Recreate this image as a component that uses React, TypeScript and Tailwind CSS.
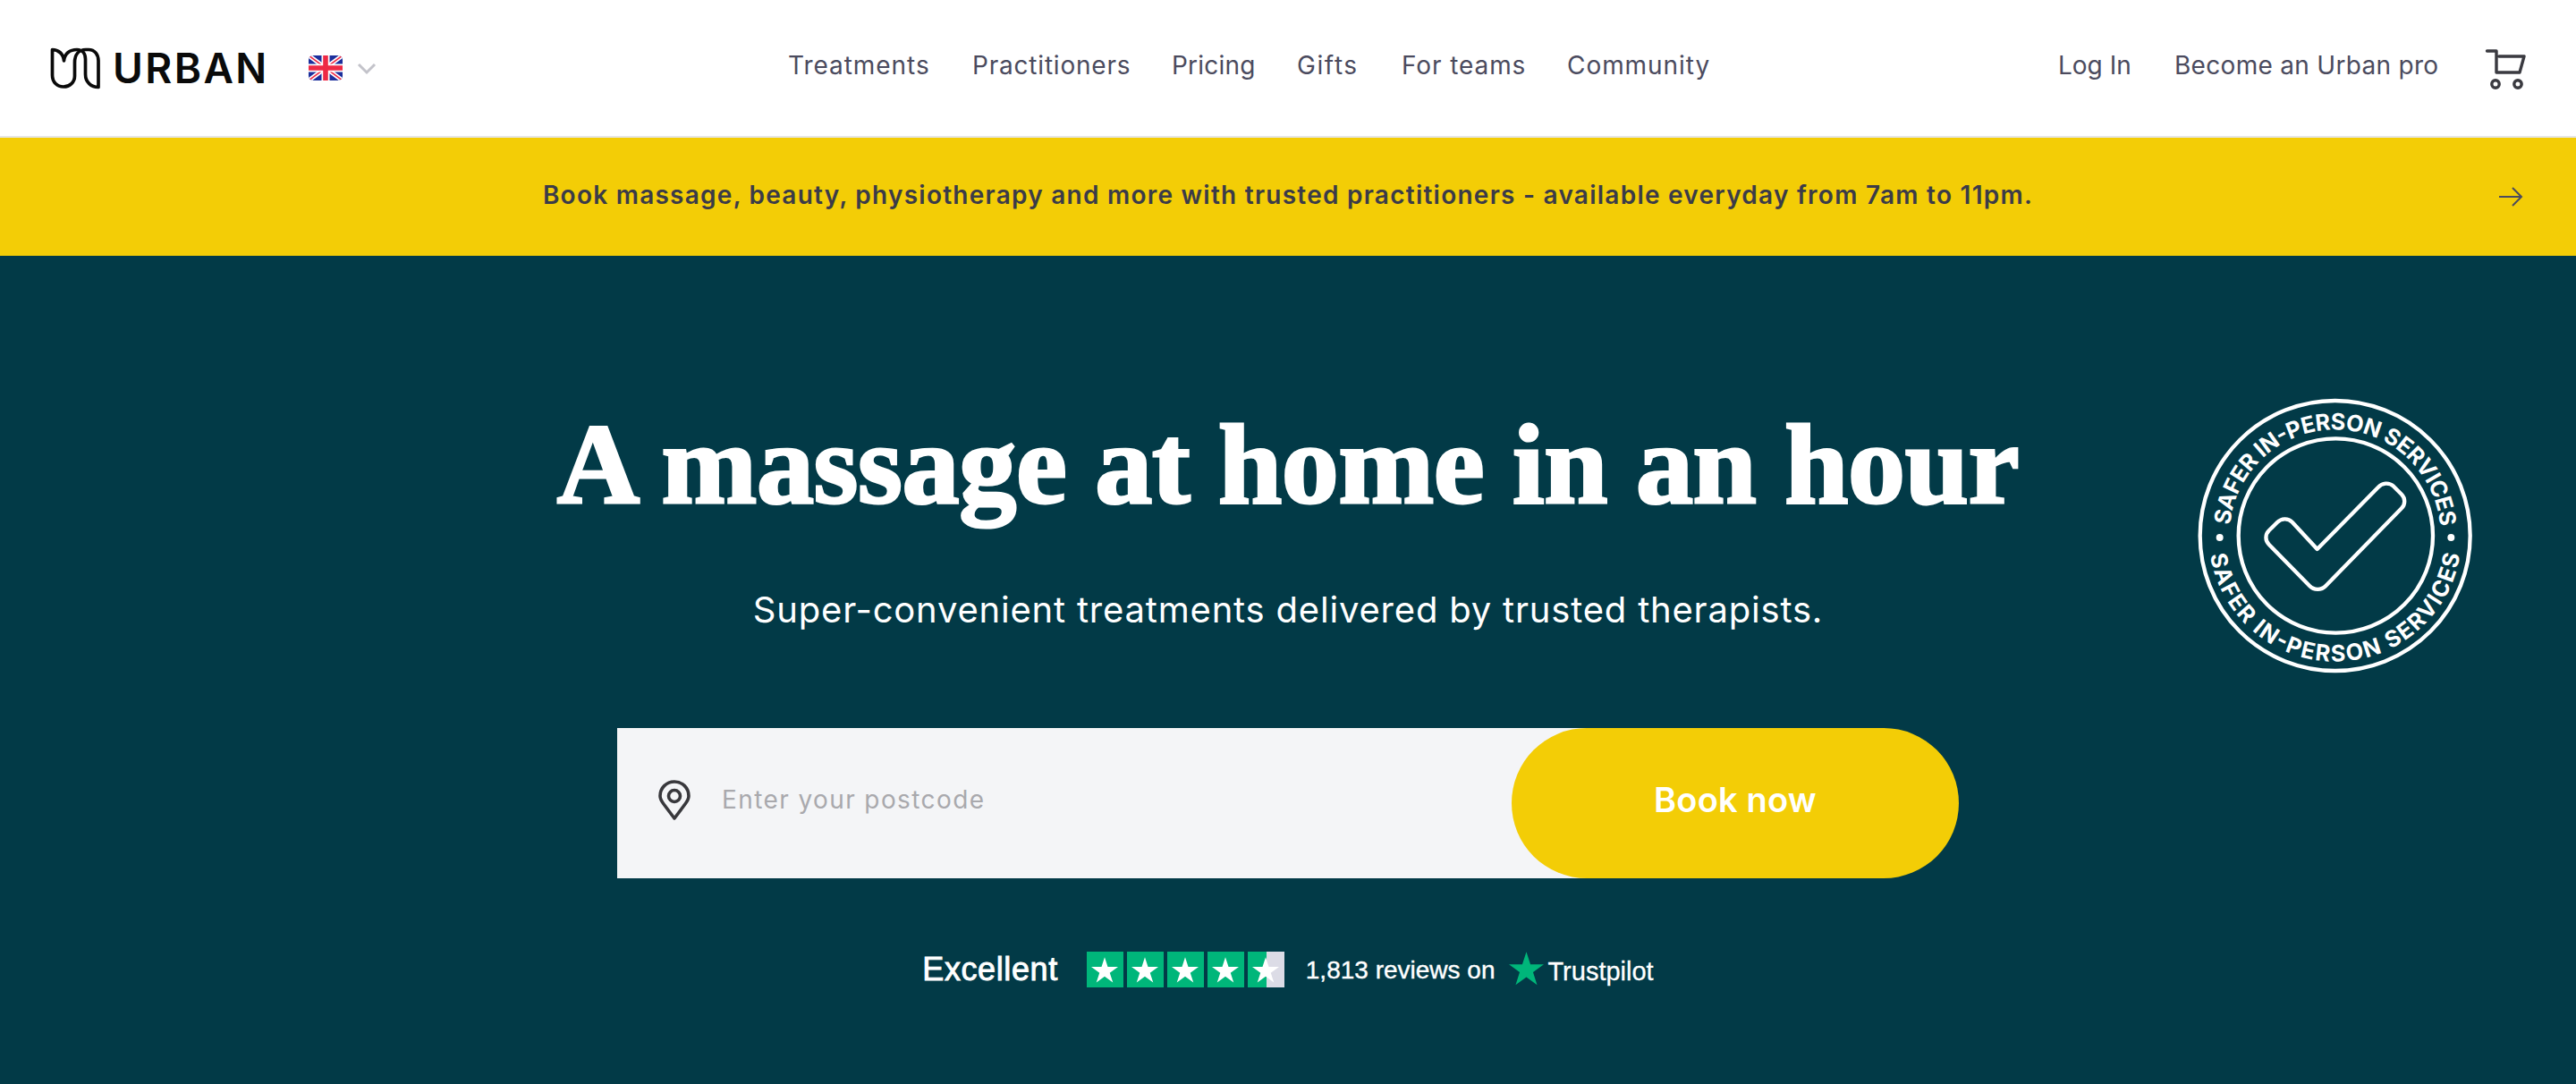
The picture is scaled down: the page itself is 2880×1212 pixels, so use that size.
import React from "react";

const navLinks = [
  { label: "Treatments", w: "w-[158px]", t: "tracking-[0.95px]", m: "" },
  { label: "Practitioners", w: "w-[175px]", t: "tracking-[0.8px]", m: "" },
  { label: "Pricing", w: "w-[92px]", t: "tracking-[0.2px]", m: "" },
  { label: "Gifts", w: "w-[69px]", t: "tracking-[1.6px]", m: "" },
  { label: "For teams", w: "w-[137px]", t: "tracking-[0.9px]", m: "" },
  { label: "Community", w: "w-[160px]", t: "tracking-[0.95px]", m: "" },
];

function LogoMark() {
  return (
    <svg width="70" height="56" viewBox="0 0 70 56" fill="none" stroke="#0a0a0a" strokeWidth="3.7" strokeLinejoin="round" className="shrink-0">
      <path d="M8.5 7.5 L8.5 36 C8.5 44 14 49 21 49 C28 49 33.5 44 33.5 37 L33.5 22 C33.5 13 38 7.5 46 7.5 L49 7.5 C56 7.5 60 13 60 20 L60 49.5 C52 49.5 45.5 44 45.5 35 L45.5 18 C45.5 12 42 7.5 36 7.5 C28 7.5 22 12 21.5 20 C21 12 15 7.5 8.5 7.5 Z" />
    </svg>
  );
}

function Flag() {
  return (
    <svg width="38" height="28" viewBox="0 0 38 28" className="shrink-0">
      <defs>
        <clipPath id="flagclip">
          <rect x="0" y="0" width="38" height="28" rx="5" />
        </clipPath>
      </defs>
      <g clipPath="url(#flagclip)">
        <rect width="38" height="28" fill="#1c2f9c" />
        <path d="M0 0 L38 28 M38 0 L0 28" stroke="#fff" strokeWidth="5" />
        <path d="M0 0 L38 28 M38 0 L0 28" stroke="#ee2a45" strokeWidth="1.6" />
        <path d="M19 0 V28 M0 14 H38" stroke="#fff" strokeWidth="9" />
        <path d="M19 0 V28 M0 14 H38" stroke="#ee2a45" strokeWidth="5.6" />
      </g>
    </svg>
  );
}

function Cart() {
  return (
    <svg width="54" height="54" viewBox="0 0 54 54" fill="none" stroke="#3a3a40" strokeWidth="3.4" strokeLinejoin="round" strokeLinecap="round" className="shrink-0">
      <path d="M4.5 8 H15 V32 H41 L46 14 H18" />
      <circle cx="14" cy="45" r="4.2" />
      <circle cx="39" cy="45" r="4.2" />
    </svg>
  );
}

function Pin() {
  return (
    <svg width="36" height="46" viewBox="0 0 36 46" fill="none" stroke="#38383c" strokeWidth="3.6" className="shrink-0">
      <path d="M18 43 L6 27 C3 23 2 21 2 18 C2 9 9 2 18 2 C27 2 34 9 34 18 C34 21 33 23 30 27 Z" strokeLinejoin="round" />
      <circle cx="18" cy="18" r="6.5" />
    </svg>
  );
}

function Badge() {
  return (
    <svg viewBox="0 0 1080 1020" width="360" height="340" fill="none" className="absolute left-[2420px] top-[144px]">
      <defs>
        <path id="badgeTop" d="M 218 505 A 354 354 0 0 1 926 505" />
        <path id="badgeBottom" d="M 148 505 A 424 424 0 0 0 996 505" />
      </defs>
      <circle cx="572" cy="507" r="453" stroke="#fff" strokeWidth="13" />
      <circle cx="574" cy="507" r="326" stroke="#fff" strokeWidth="13" />
      <circle cx="185" cy="513" r="12" fill="#fff" />
      <circle cx="961" cy="513" r="12" fill="#fff" />
      <path
        d="M512 552 L716 345 C730 330 752 327 768 341 L795 368 C808 381 808 402 795 415 L540 676 C527 690 500 690 487 676 L350 536 C337 523 337 503 350 490 L378 462 C392 448 414 447 428 461 Z"
        stroke="#fff"
        strokeWidth="13"
        strokeLinejoin="round"
      />
      <text fill="#fff" fontSize="76" fontWeight="700" fontFamily="Inter, sans-serif">
        <textPath href="#badgeTop" startOffset="3%" textLength="1050" lengthAdjust="spacing">
          SAFER IN-PERSON SERVICES
        </textPath>
      </text>
      <text fill="#fff" fontSize="76" fontWeight="700" fontFamily="Inter, sans-serif">
        <textPath href="#badgeBottom" startOffset="5%" textLength="1200" lengthAdjust="spacing">
          SAFER IN-PERSON SERVICES
        </textPath>
      </text>
    </svg>
  );
}

function TpStar({ className }: { className?: string }) {
  return (
    <svg viewBox="0 0 24 23" className={className}>
      <path d="M12 0 L14.8 8.6 H24 L16.6 14 L19.4 22.7 L12 17.3 L4.6 22.7 L7.4 14 L0 8.6 H9.2 Z" fill="currentColor" />
    </svg>
  );
}

function Stars() {
  return (
    <div className="flex gap-1 h-10">
      {[0, 1, 2, 3].map((i) => (
        <div key={i} className="w-[41px] h-10 bg-[#00b67a] flex items-center justify-center">
          <TpStar className="w-[30px] h-[29px] text-white" />
        </div>
      ))}
      <div className="relative w-[41px] h-10 bg-[#dcdce6] flex items-center justify-center overflow-hidden">
        <div className="absolute left-0 top-0 h-10 w-[21px] bg-[#00b67a]" />
        <TpStar className="relative w-[30px] h-[29px] text-white" />
      </div>
    </div>
  );
}

export default function App() {
  return (
    <div className="w-[2880px] h-[1212px] overflow-hidden flex flex-col bg-[#023a47] font-['Inter',sans-serif]">
      <header className="h-[154px] shrink-0 bg-white border-b-2 border-[#e6e6e6] flex items-center pl-[50px] pr-[50px] text-[28px] text-[#4b4b5e]">
        <div className="flex items-center">
          <LogoMark />
          <span className="ml-[6px] text-[46px] font-semibold tracking-[2.4px] text-[#0a0a0a] leading-none w-[172px] whitespace-nowrap">URBAN</span>
          <div className="ml-[47px]">
            <Flag />
          </div>
          <svg width="22" height="14" viewBox="0 0 22 14" fill="none" stroke="#c3c3ca" strokeWidth="3" className="ml-[16px] mt-[2px]">
            <path d="M2 2 L11 11 L20 2" />
          </svg>
        </div>
        <nav className="ml-[460px] flex items-center gap-12 -mt-[7px]">
          {navLinks.map((l) => (
            <a key={l.label} className={`${l.w} ${l.t} whitespace-nowrap`}>
              {l.label}
            </a>
          ))}
        </nav>
        <div className="ml-auto flex items-center">
          <a className="w-[82px] whitespace-nowrap -mt-[7px]">Log In</a>
          <a className="ml-12 w-[294px] tracking-[0.3px] whitespace-nowrap -mt-[7px]">Become an Urban pro</a>
          <div className="ml-[51px]">
            <Cart />
          </div>
        </div>
      </header>

      <div className="h-[132px] shrink-0 bg-[#f3cd06] relative flex items-center justify-center text-[28px] font-semibold text-[#3b3b48]">
        <span className="-mt-[4px] tracking-[1.25px]">Book massage, beauty, physiotherapy and more with trusted practitioners - available everyday from 7am to 11pm.</span>
        <svg width="30" height="24" viewBox="0 0 30 24" fill="none" stroke="#4b4b5e" strokeWidth="2" className="absolute right-[58px] top-[54px]">
          <path d="M2 12 H27 M17 2 L27 12 L17 22" />
        </svg>
      </div>

      <main className="relative flex-1 flex flex-col items-center text-white">
        <Badge />
        <h1 className="mt-[163px] text-[128px] leading-[140px] font-bold whitespace-nowrap tracking-[-0.3px] [-webkit-text-stroke:3px_white] font-['Liberation_Serif',serif]">
          A massage at home in an hour
        </h1>
        <p className="mt-[68px] text-[40px] leading-[50px] tracking-[0.8px]">Super-convenient treatments delivered by trusted therapists.</p>
        <form className="mt-[107px] flex w-[1500px] h-[168px]">
          <div className="w-[1110px] bg-[#f4f5f7] flex items-center pl-[46px] pb-[6px]">
            <Pin />
            <input
              placeholder="Enter your postcode"
              className="ml-[35px] w-[600px] bg-transparent outline-none text-[28px] tracking-[1.4px] -mt-[3px] placeholder:text-[#a9a9ad]"
            />
          </div>
          <button type="button" className="relative -ml-[110px] w-[500px] h-[168px] rounded-full bg-[#f3cd06] text-white text-[38px] tracking-[0.2px] font-semibold pb-[7px]">
            Book now
          </button>
        </form>
        <div className="mt-[80px] flex items-center font-['Liberation_Sans',sans-serif]">
          <span className="text-[36px] leading-10 tracking-[0.6px] [-webkit-text-stroke:0.9px_white]">Excellent</span>
          <div className="ml-[32px]">
            <Stars />
          </div>
          <span className="ml-6 text-[28px] leading-10 mt-[2px] [-webkit-text-stroke:0.4px_white]">1,813 reviews on</span>
          <TpStar className="ml-[16px] w-[39px] h-[38px] text-[#00b67a] -mt-[2px]" />
          <span className="ml-[4px] text-[29px] leading-10 mt-[4px] [-webkit-text-stroke:0.3px_white]">Trustpilot</span>
        </div>
      </main>
    </div>
  );
}
